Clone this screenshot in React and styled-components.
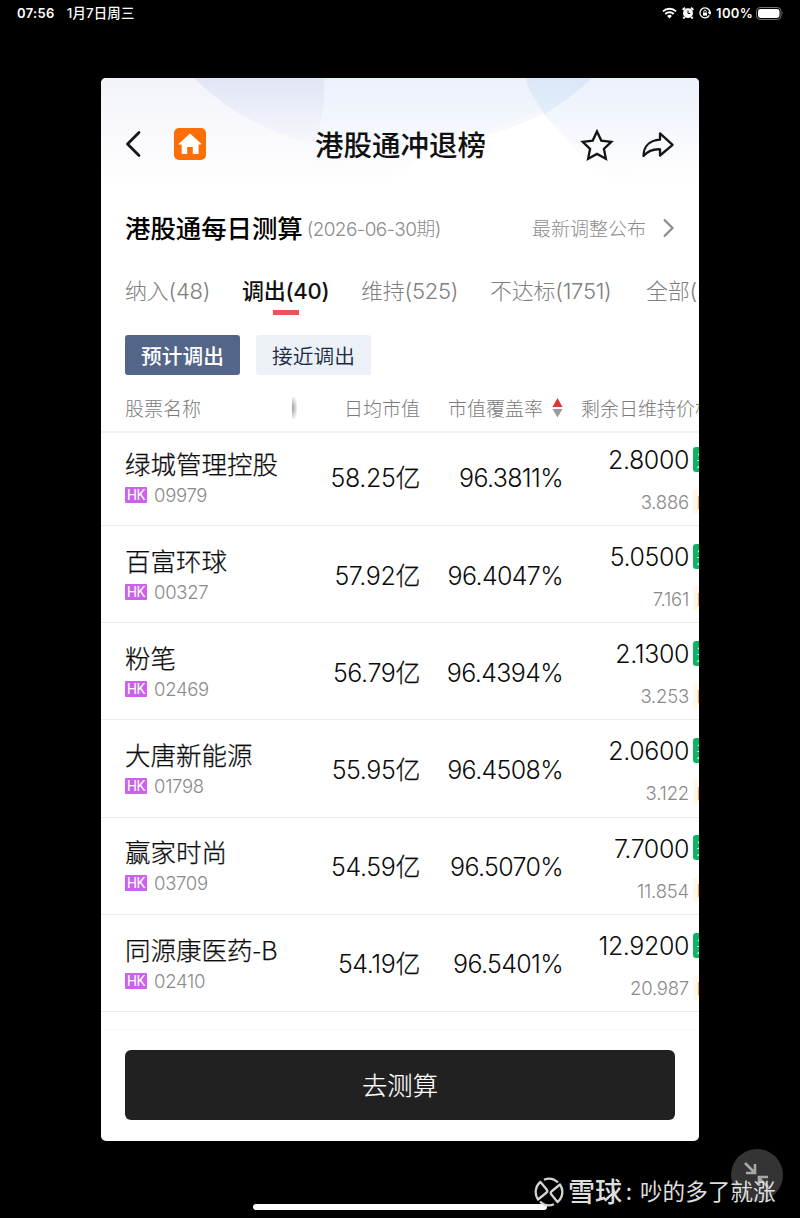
import React from 'react';
import styled, { createGlobalStyle, css } from 'styled-components';

const GlobalStyle = createGlobalStyle`
  * {
    box-sizing: border-box;
  }

  body {
    margin: 0;
    background-color: #000;
    font-family: 'Noto Sans CJK SC', sans-serif;
  }
`;

const Screen = styled.div`
  position: relative;
  width: 800px;
  height: 1218px;
  overflow: hidden;
  background-color: #000;
`;

const StatusBar = styled.div`
  display: flex;
  justify-content: space-between;
  height: 26px;
  padding: 0 16px 0 17px;
  color: #fff;
  font-family: 'Inter', 'Noto Sans CJK SC', sans-serif;
  font-size: 13px;
  font-weight: 600;
  line-height: 26px;
  white-space: nowrap;
`;

const StatusGroup = styled.div`
  display: flex;
  align-items: center;
  gap: ${({ gap }) => gap}px;
`;

const StatusText = styled.span`
  letter-spacing: ${({ spacing }) => spacing || 0}px;
`;

const DateText = styled(StatusText)`
  font-size: 13.4px;
  font-weight: 500;
`;

const BatteryLevel = styled(StatusText)`
  margin-right: -2px;
`;

const Phone = styled.div`
  position: relative;
  display: flex;
  flex-direction: column;
  width: 598px;
  height: 1063px;
  margin: 52px 0 0 101px;
  border-radius: 5px;
  overflow: hidden;
  background-color: #fff;
`;

const Backdrop = styled.svg`
  position: absolute;
  top: 0;
  left: 0;
`;

const NavBar = styled.div`
  position: relative;
  display: flex;
  align-items: center;
  height: 72px;
  margin-top: 30px;
  padding: 0 24px 0 23px;
`;

const NavSide = styled.div`
  display: flex;
  flex: 1;
  align-items: center;
  justify-content: ${({ end }) => (end ? 'flex-end' : 'flex-start')};
  gap: ${({ end }) => (end ? 27 : 33)}px;
  padding-top: ${({ end }) => (end ? 1.4 : 0)}px;
`;

const HomeBadge = styled.div`
  display: flex;
  width: 32px;
  height: 32px;
  border-radius: 5px;
  background-color: #fd6f05;
`;

const Title = styled.h1`
  margin: 0 -1px 0 1px;
  color: #111;
  font-size: 28.5px;
  font-weight: 500;
  line-height: 40px;
`;

const SubHeader = styled.div`
  position: relative;
  display: flex;
  align-items: center;
  height: 40px;
  margin-top: 27px;
  padding: 0 24px;
  color: #8c8c8c;
  font-size: 19px;
  font-weight: 300;
  white-space: nowrap;
`;

const SubTitle = styled.h2`
  margin: 0 4px 0 0;
  color: #000;
  font-size: 25.4px;
  font-weight: 500;
`;

const Period = styled.span`
  flex: 1;
  font-family: 'Inter', 'Noto Sans CJK SC', sans-serif;
  letter-spacing: -0.63px;
`;

const Release = styled.span`
  margin-right: 16px;
`;

const Tabs = styled.div`
  display: flex;
  gap: 33px;
  height: 46px;
  margin-top: 23px;
  padding-left: 24px;
`;

const Tab = styled.div`
  position: relative;
  width: ${({ width }) => width}px;
  flex: none;
  color: #808080;
  font-family: 'Inter', 'Noto Sans CJK SC', sans-serif;
  font-size: 22px;
  font-weight: 300;
  line-height: 42px;
  letter-spacing: -0.25px;
  white-space: nowrap;

  ${({ active }) =>
    active &&
    css`
      color: #111;
      font-weight: 500;

      &::after {
        content: '';
        position: absolute;
        top: 40px;
        left: 31px;
        width: 26px;
        height: 5px;
        background-color: #ea5358;
      }
    `}
`;

const Filters = styled.div`
  display: flex;
  gap: 16px;
  margin-top: 19px;
  padding-left: 24px;
`;

const FilterButton = styled.button`
  width: 115px;
  height: 40px;
  padding: 0;
  border: 0;
  border-radius: 3px;
  background-color: ${({ active }) => (active ? '#546688' : '#ebf1f7')};
  color: ${({ active }) => (active ? '#fff' : '#1c2a44')};
  font-family: inherit;
  font-size: 20.7px;
  font-weight: ${({ active }) => (active ? 500 : 350)};
  line-height: 40px;
`;

const TableRow = styled.div`
  display: grid;
  grid-template-columns: 170px 125px 143px 126px 60px;
  width: 700px;
  padding-left: 24px;
`;

const TableHead = styled(TableRow)`
  align-items: center;
  height: 58px;
  padding-top: 9px;
  border-bottom: 2px solid #f3f3f3;
  color: #7a7a7a;
  font-size: 19px;
  font-weight: 300;
  white-space: nowrap;
`;

const HeadCell = styled.div`
  display: flex;
  align-items: center;
  justify-content: ${({ align }) => align || 'flex-end'};
  gap: 9px;
`;

const LastHead = styled.div`
  padding-left: 18px;
`;

const ScrollShade = styled.i`
  width: 5px;
  height: 22px;
  margin-right: -2px;
  background: radial-gradient(ellipse at left, #999 0%, #ddd 55%, #fff 85%);
`;

const Row = styled(TableRow)`
  align-items: end;
  height: 97.2px;
  border-bottom: 1px solid #ececec;

  &:first-child {
    height: 93px;
  }
`;

const NameCell = styled.div`
  padding-bottom: 17.4px;
`;

const Name = styled.div`
  color: #0c0c0c;
  font-size: 25.5px;
  font-weight: 300;
  line-height: 38px;
  white-space: nowrap;
  -webkit-text-stroke: 0.25px #0c0c0c;
`;

const CodeLine = styled.div`
  display: flex;
  align-items: center;
  gap: 7px;
  height: 26px;
`;

const MarketTag = styled.span`
  width: 22px;
  height: 16px;
  border-radius: 1px;
  background-color: #cb62ee;
  color: #fff;
  font-family: 'Roboto', sans-serif;
  font-size: 14px;
  letter-spacing: -0.4px;
  line-height: 16.5px;
  text-align: center;
`;

const Digits = styled.span`
  font-family: 'Inter', 'Noto Sans CJK SC', sans-serif;
  font-weight: 300;
`;

const Code = styled(Digits)`
  color: #8a8a8a;
  font-size: 18.5px;
  letter-spacing: -0.3px;
`;

const Value = styled(Digits)`
  padding-bottom: 27.6px;
  color: #0c0c0c;
  font-size: 25px;
  letter-spacing: ${({ spacing }) => spacing}px;
  line-height: 38px;
  text-align: right;
  white-space: nowrap;
`;

const Unit = styled.span`
  -webkit-text-stroke: 0.25px #0c0c0c;
`;

const PriceCell = styled.div`
  display: flex;
  flex-direction: column;
  align-items: flex-end;
  padding-bottom: 8.2px;
`;

const Price = styled(Digits)`
  color: #0c0c0c;
  font-size: 25px;
  letter-spacing: -0.4px;
  line-height: 38px;
`;

const LastPrice = styled(Digits)`
  margin-top: 8px;
  color: #8a8a8a;
  font-size: 18.5px;
  letter-spacing: -0.2px;
  line-height: 30px;
`;

const FlagCell = styled.div`
  display: flex;
  flex-direction: column;
  gap: 17px;
  padding: 0 0 11.4px 4px;
`;

const Flag = styled.span`
  width: 26px;
  height: 25px;
  padding-left: ${({ soft }) => (soft ? 4 : 3.6)}px;
  border-radius: 3px;
  background-color: ${({ soft }) => (soft ? '#fff6ec' : '#0fb463')};
  color: ${({ soft }) => (soft ? '#f09a4a' : '#fff')};
  font-size: 16px;
  line-height: 26px;
`;

const Footer = styled.div`
  flex: 1;
  margin-top: 17.4px;
  padding: 20px 24px 0;
  border-top: 1px solid #f9f9f9;
`;

const CalcButton = styled.button`
  width: 100%;
  height: 70px;
  padding: 0 0 2px;
  border: 0;
  border-radius: 6px;
  background-color: #212121;
  color: #fff;
  font-family: inherit;
  font-size: 25.3px;
  font-weight: 300;
  -webkit-text-stroke: 0.2px #fff;
`;

const HomeIndicator = styled.div`
  position: absolute;
  top: 1204px;
  left: 253px;
  width: 294px;
  height: 6px;
  border-radius: 3px;
  background-color: #fff;
`;

const ShrinkButton = styled.div`
  position: absolute;
  top: 1149px;
  left: 731px;
  width: 52px;
  height: 52px;
  border-radius: 50%;
  background-color: #343434;
`;

const Watermark = styled.div`
  position: absolute;
  top: 1175px;
  left: 534px;
  display: flex;
  align-items: center;
  height: 34px;
  color: #dedede;
  font-size: 22.6px;
  line-height: 32px;
  white-space: nowrap;
`;

const WatermarkText = styled.span`
  padding-bottom: 2px;
`;

const Brand = styled(WatermarkText)`
  margin-left: 4px;
  font-size: 27px;
  font-weight: 500;
`;

const Separator = styled(WatermarkText)`
  width: 18px;
  padding-right: 4px;
  text-align: center;
`;

const stocks = [
  { name: '绿城管理控股', code: '09979', cap: '58.25', rate: '96.3811%', price: '2.8000', last: '3.886' },
  { name: '百富环球', code: '00327', cap: '57.92', rate: '96.4047%', price: '5.0500', last: '7.161' },
  { name: '粉笔', code: '02469', cap: '56.79', rate: '96.4394%', price: '2.1300', last: '3.253' },
  { name: '大唐新能源', code: '01798', cap: '55.95', rate: '96.4508%', price: '2.0600', last: '3.122' },
  { name: '赢家时尚', code: '03709', cap: '54.59', rate: '96.5070%', price: '7.7000', last: '11.854' },
  { name: '同源康医药-B', code: '02410', cap: '54.19', rate: '96.5401%', price: '12.9200', last: '20.987' },
];

const tabs = [
  { label: '纳入(48)', width: 84 },
  { label: '调出(40)', width: 86, active: true },
  { label: '维持(525)', width: 96 },
  { label: '不达标(1751)', width: 123 },
  { label: '全部(2464)', width: 110 },
];

const WifiIcon = () => (
  <svg width="15" height="12" viewBox="0 0 15 12" fill="none" stroke="#fff" strokeWidth="2">
    <path d="M1 4.4a9.3 9.3 0 0 1 13 0M3.3 7a6 6 0 0 1 8.4 0" />
    <path d="M5.1 8.9a3.5 3.5 0 0 1 4.8 0L7.5 11.5z" fill="#fff" stroke="none" />
  </svg>
);

const AlarmIcon = () => (
  <svg width="12" height="12" viewBox="0 0 12 12">
    <circle cx="6" cy="6.2" r="4.9" fill="#fff" />
    <path d="M.7 3 3 .8M11.3 3 9 .8M2.5 10 1.3 11.5M9.5 10l1.2 1.5" stroke="#fff" strokeWidth="2" />
    <path d="M6 3.4v3h2.3" stroke="#000" fill="none" />
  </svg>
);

const LockIcon = () => (
  <svg width="12" height="12" viewBox="0 0 12 12" fill="none" stroke="#fff" strokeWidth="1.3">
    <path d="M10.3 8.4A5 5 0 1 1 11 5.5" />
    <path d="m9.3 5 1.7 1.8L12 4.6" />
    <path d="M4 5.6h4v3H4z" fill="#fff" stroke="none" />
    <path d="M4.8 5.5V4.4a1.2 1.2 0 0 1 2.4 0v1.1" strokeWidth="0.9" />
  </svg>
);

const BatteryIcon = () => (
  <svg width="28" height="13" viewBox="0 0 28 13">
    <rect x=".5" y=".5" width="24.5" height="12" rx="3.6" fill="none" stroke="#777" />
    <rect x="2" y="2" width="21.5" height="9" rx="2.4" fill="#fff" />
    <path d="M26.3 4.3q1.4 2.2 0 4.4z" fill="#777" />
  </svg>
);

const HeaderBackdrop = () => (
  <Backdrop width="598" height="110" viewBox="0 0 598 110">
    <defs>
      <linearGradient id="base" x1="0" y1="0" x2="0" y2="1">
        <stop offset="0" stopColor="#f3f4fa" />
        <stop offset="1" stopColor="#fff" />
      </linearGradient>
      <linearGradient id="violet" x1="0" y1="0" x2="0" y2="1">
        <stop offset="0" stopColor="#e1e5f4" />
        <stop offset="1" stopColor="#f6f8fd" />
      </linearGradient>
      <linearGradient id="sky" x1="0" y1="0" x2="0" y2="1">
        <stop offset="0" stopColor="#ebf1fb" />
        <stop offset="1" stopColor="#fff" />
      </linearGradient>
      <linearGradient id="overlap" x1="0" y1="0" x2="0" y2="1">
        <stop offset="0" stopColor="#dae7f7" />
        <stop offset="1" stopColor="#e4eefa" />
      </linearGradient>
    </defs>
    <path d="M0 0h598v110H0z" fill="url(#base)" />
    <path d="M223 0H491Q400 66 280 68L195 110H208Q224 60 223 0z" fill="url(#sky)" />
    <path d="M491 0Q464 24 442 36Q395 60 330 68L280 110H520Q460 70 424 0z" fill="#fff" />
    <path d="M424 0H598V104Q500 104 442 36Q432 20 424 0z" fill="url(#sky)" />
    <path d="M93 0H223Q225 34 214 66Q140 48 93 0z" fill="url(#violet)" />
    <path d="M424 0H491Q466 23 444 36Q430 18 424 0z" fill="url(#overlap)" />
  </Backdrop>
);

const App = () => (
  <Screen>
    <GlobalStyle />
    <StatusBar>
      <StatusGroup gap={12}>
        <StatusText spacing={0.35}>07:56</StatusText>
        <DateText spacing={0.15}>1月7日周三</DateText>
      </StatusGroup>
      <StatusGroup gap={5}>
        <WifiIcon />
        <AlarmIcon />
        <LockIcon />
        <BatteryLevel spacing={0.3}>100%</BatteryLevel>
        <BatteryIcon />
      </StatusGroup>
    </StatusBar>

    <Phone>
      <HeaderBackdrop />
      <NavBar>
        <NavSide>
          <svg width="17" height="28" viewBox="0 0 17 28" fill="none" stroke="#151515" strokeWidth="2.8">
            <path d="M15 2.5 3.5 14 15 25.5" strokeLinecap="round" strokeLinejoin="round" />
          </svg>
          <HomeBadge>
            <svg width="32" height="32" viewBox="0 0 32 32" fill="#fff">
              <path d="M16 5.5 27 15.5c.5.6.2 1-.5 1H24.6V26H18.8v-7h-5.6v7H7.7v-9.5H5.5c-.8 0-1-.5-.4-1z" />
            </svg>
          </HomeBadge>
        </NavSide>
        <Title>港股通冲退榜</Title>
        <NavSide end>
          <svg width="34" height="32" viewBox="0 0 34 32" fill="none" stroke="#151515" strokeWidth="2.3">
            <path d="m17 2.4 4.3 9.2 10 1.2-7.4 7 2 10L17 24.9l-8.9 4.9 2-10-7.4-7 10-1.2z" />
          </svg>
          <svg width="34" height="28" viewBox="0 0 34 28" fill="none" stroke="#151515" strokeWidth="2.3">
            <path
              d="M19 2.3 31.6 13.8 19 24.5v-6.2C12 17.8 7 20 2.5 25 2.5 16 8 9.5 19 8.7z"
              strokeLinejoin="round"
            />
          </svg>
        </NavSide>
      </NavBar>

      <SubHeader>
        <SubTitle>港股通每日测算</SubTitle>
        <Period>(2026-06-30期)</Period>
        <Release>最新调整公布</Release>
        <svg width="13" height="22" viewBox="0 0 13 22" fill="none" stroke="#8c8c8c" strokeWidth="2.2">
          <path d="m2 3.5 8.5 8.5L2 20.5" />
        </svg>
      </SubHeader>

      <Tabs>
        {tabs.map(({ label, width, active }) => (
          <Tab key={label} width={width} active={active}>
            {label}
          </Tab>
        ))}
      </Tabs>

      <Filters>
        <FilterButton active>预计调出</FilterButton>
        <FilterButton>接近调出</FilterButton>
      </Filters>

      <TableHead>
        <HeadCell align="space-between">
          股票名称
          <ScrollShade />
        </HeadCell>
        <HeadCell>日均市值</HeadCell>
        <HeadCell>
          市值覆盖率
          <svg width="11" height="20" viewBox="0 0 11 20">
            <path d="M5.5 0 10.5 9H.5z" fill="#dc3437" />
            <path d="M.5 11h10l-5 8.5z" fill="#9b9b9b" />
          </svg>
        </HeadCell>
        <LastHead>剩余日维持价格</LastHead>
      </TableHead>

      <div>
        {stocks.map(({ name, code, cap, rate, price, last }) => (
          <Row key={code}>
            <NameCell>
              <Name>{name}</Name>
              <CodeLine>
                <MarketTag>HK</MarketTag>
                <Code>{code}</Code>
              </CodeLine>
            </NameCell>
            <Value spacing={-0.4}>
              {cap}
              <Unit>亿</Unit>
            </Value>
            <Value spacing={-0.65}>{rate}</Value>
            <PriceCell>
              <Price>{price}</Price>
              <LastPrice>{last}</LastPrice>
            </PriceCell>
            <FlagCell>
              <Flag>过</Flag>
              <Flag soft>昨</Flag>
            </FlagCell>
          </Row>
        ))}
      </div>

      <Footer>
        <CalcButton>去测算</CalcButton>
      </Footer>
    </Phone>

    <HomeIndicator />
    <ShrinkButton>
      <svg width="52" height="52" viewBox="0 0 52 52" fill="none" stroke="#a8a8a8" strokeWidth="2.6">
        <path d="m14 14 9 9M15 24h9v-9M37 38l-9-9M28 37v-9h9" />
      </svg>
    </ShrinkButton>
    <Watermark>
      <svg width="30" height="30" viewBox="0 0 30 30" fill="none" stroke="#d4d4d4" strokeWidth="2.3">
        <path d="M10 2.7A13 13 0 0 1 24 5.5M20 27.3A13 13 0 0 1 6 24.5" />
        <path d="M6.5 5A13 13 0 0 0 4 22.5L12.6 15.5Q14 14 12.6 12.4z" strokeLinejoin="round" />
        <path d="M23.5 25A13 13 0 0 0 26 7.5L17.4 14.5Q16 16 17.4 17.6z" strokeLinejoin="round" />
      </svg>
      <Brand>雪球</Brand>
      <Separator>:</Separator>
      <WatermarkText>吵的多了就涨</WatermarkText>
    </Watermark>
  </Screen>
);

export default App;
